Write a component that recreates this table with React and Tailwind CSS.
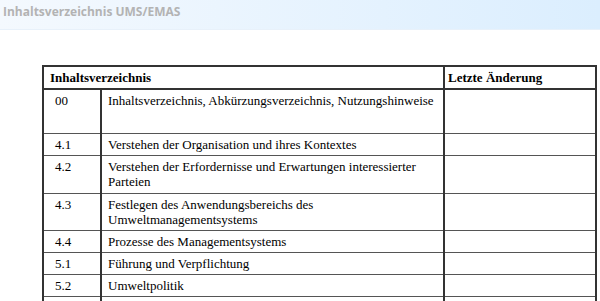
const rows = [
  { nr: '00', text: 'Inhaltsverzeichnis, Abkürzungsverzeichnis, Nutzungshinweise', h: 'h-[44px]' },
  { nr: '4.1', text: 'Verstehen der Organisation und ihres Kontextes', h: 'h-[22px]' },
  { nr: '4.2', text: 'Verstehen der Erfordernisse und Erwartungen interessierter Parteien', h: 'h-[38px]' },
  { nr: '4.3', text: 'Festlegen des Anwendungsbereichs des Umweltmanagementsystems', h: 'h-[37px]' },
  { nr: '4.4', text: 'Prozesse des Managementsystems', h: 'h-[22px]' },
  { nr: '5.1', text: 'Führung und Verpflichtung', h: 'h-[22px]' },
  { nr: '5.2', text: 'Umweltpolitik', h: 'h-[22px]' },
  { nr: '5.3', text: 'Rollen, Verantwortlichkeiten und Befugnisse', h: 'h-[22px]' },
];

const App = () => {
  return (
    <div className="w-[600px] h-[301px] overflow-hidden bg-white">
      {/* Title bar */}
      <div className="h-[30px] flex items-center px-[3px] bg-gradient-to-r from-[#f4f9fe] to-[#dbeefe] border-b border-[#e8f1fa]">
        <span className="text-[12px] font-bold text-[#b3b3b3] font-['Open_Sans',sans-serif] -mt-[6px]">
          Inhaltsverzeichnis UMS/EMAS
        </span>
      </div>

      {/* Table */}
      <div className="pt-[35px] pl-[42px]">
        <table className="table-fixed border-collapse w-[553px] font-['Liberation_Serif',serif] text-[13px] leading-[15px] text-black">
          <colgroup>
            <col className="w-[58px]" />
            <col className="w-[343px]" />
            <col className="w-[152px]" />
          </colgroup>
          <thead>
            <tr>
              <th colSpan={2} className="h-[23px] border-2 border-[#333] text-left font-bold align-top pt-[3px] pl-[6px]">
                Inhaltsverzeichnis
              </th>
              <th className="border-2 border-[#333] text-left font-bold align-top pt-[3px] pl-[3px]">
                Letzte Änderung
              </th>
            </tr>
          </thead>
          <tbody>
            {rows.map((r) => (
              <tr key={r.nr}>
                <td className={`${r.h} border-x-2 border-x-[#333] border-y border-y-[#555] align-top pt-[3px] pl-[11px]`}>
                  {r.nr}
                </td>
                <td className="border-x-2 border-x-[#333] border-y border-y-[#555] align-top pt-[3px] pl-[6px] pr-[2px]">
                  {r.text}
                </td>
                <td className="border-x-2 border-x-[#333] border-y border-y-[#555]"></td>
              </tr>
            ))}
          </tbody>
        </table>
      </div>
    </div>
  );
};

export default App;
